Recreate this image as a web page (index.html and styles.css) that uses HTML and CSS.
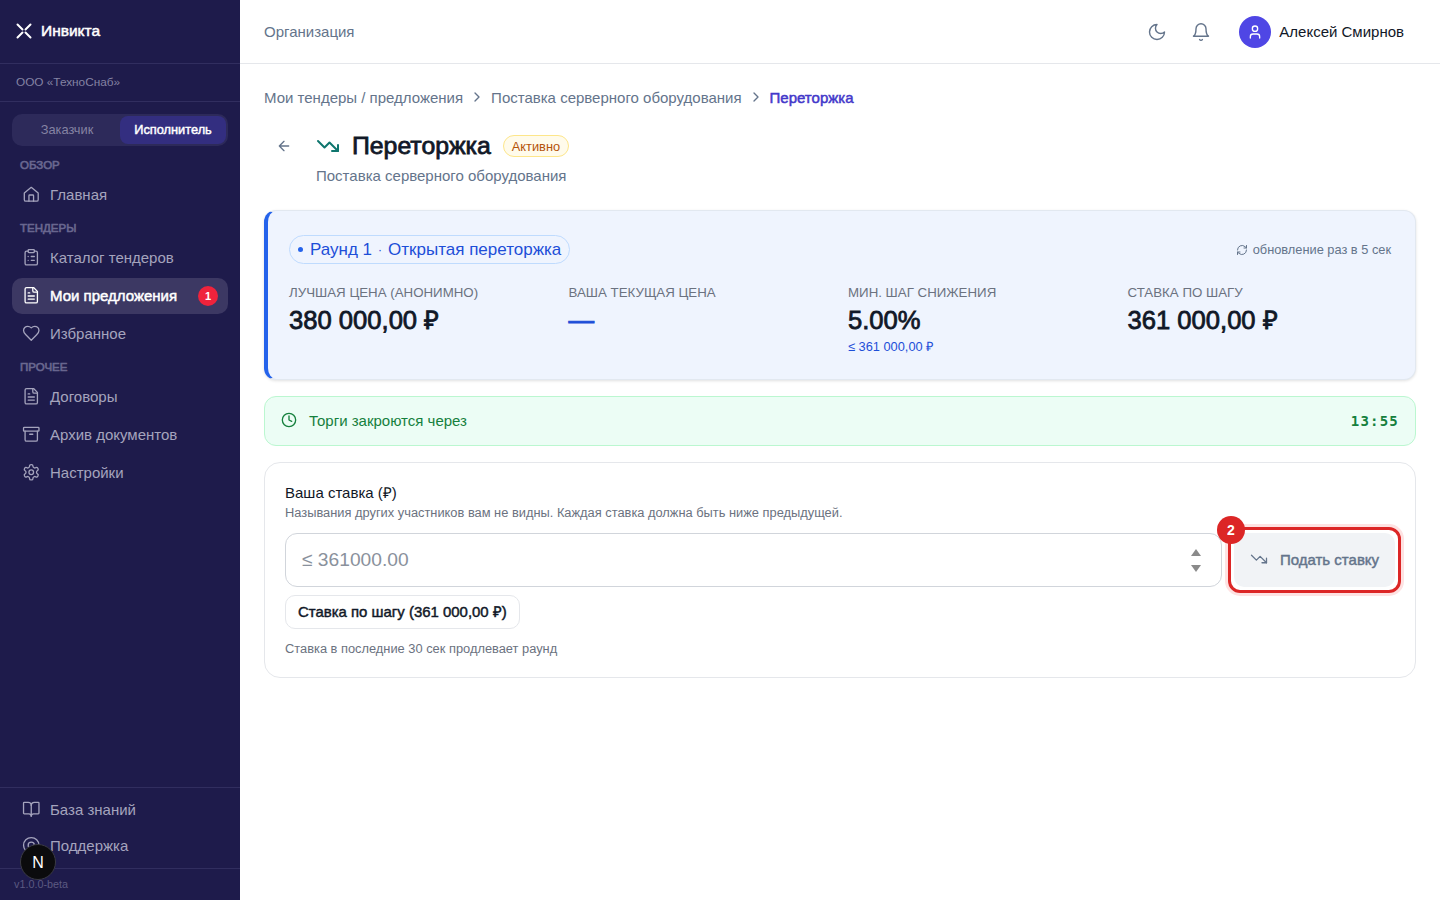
FILE: index.html
```html
<!DOCTYPE html>
<html lang="ru">
<head>
    <meta charset="UTF-8">
    <meta name="viewport" content="width=device-width, initial-scale=1.0">
    <title>Переторжка</title>
    <link rel="stylesheet" href="styles.css">
</head>
<body>
    <aside class="sidebar">
        <div class="logo">
            <svg class="logo-icon" viewBox="0 0 16 16" fill="none" stroke="#fff" stroke-width="2.200" stroke-linecap="butt"><path d="M1.500 1.500l5 5M14.500 1.500l-5 5M1.500 14.500l5-5M14.500 14.500l-5-5"/></svg>
            <span>Инвикта</span>
        </div>
        <div class="org">ООО «ТехноСнаб»</div>
        <div class="roles">
            <span class="role">Заказчик</span>
            <span class="role role-on">Исполнитель</span>
        </div>
        <nav class="nav">
            <div class="nav-label">ОБЗОР</div>
            <a class="nav-item"><svg class="ico" viewBox="0 0 24 24"><path d="M3 10.500 12 3l9 7.500V19a2 2 0 0 1-2 2H5a2 2 0 0 1-2-2z"/><path d="M9 21v-7a1 1 0 0 1 1-1h4a1 1 0 0 1 1 1v7"/></svg>Главная</a>
            <div class="nav-label">ТЕНДЕРЫ</div>
            <a class="nav-item"><svg class="ico" viewBox="0 0 24 24"><rect x="8" y="2" width="8" height="4" rx="1"/><path d="M16 4h2a2 2 0 0 1 2 2v14a2 2 0 0 1-2 2H6a2 2 0 0 1-2-2V6a2 2 0 0 1 2-2h2"/><path d="M12 11h4M12 16h4M8 11h.01M8 16h.01"/></svg>Каталог тендеров</a>
            <a class="nav-item nav-on"><svg class="ico" viewBox="0 0 24 24"><path d="M15 2H6a2 2 0 0 0-2 2v16a2 2 0 0 0 2 2h12a2 2 0 0 0 2-2V7z"/><path d="M14 2v4a2 2 0 0 0 2 2h4M10 9H8M16 13H8M16 17H8"/></svg>Мои предложения<span class="count">1</span></a>
            <a class="nav-item"><svg class="ico" viewBox="0 0 24 24"><path d="M19 14c1.500-1.500 3-3.200 3-5.500A5.500 5.500 0 0 0 16.500 3c-1.800 0-3 .5-4.500 2-1.500-1.500-2.700-2-4.500-2A5.500 5.500 0 0 0 2 8.500c0 2.300 1.500 4 3 5.500l7 7z"/></svg>Избранное</a>
            <div class="nav-label">ПРОЧЕЕ</div>
            <a class="nav-item"><svg class="ico" viewBox="0 0 24 24"><path d="M15 2H6a2 2 0 0 0-2 2v16a2 2 0 0 0 2 2h12a2 2 0 0 0 2-2V7z"/><path d="M14 2v4a2 2 0 0 0 2 2h4M10 9H8M16 13H8M16 17H8"/></svg>Договоры</a>
            <a class="nav-item"><svg class="ico" viewBox="0 0 24 24"><rect x="2" y="3" width="20" height="5" rx="1"/><path d="M4 8v11a2 2 0 0 0 2 2h12a2 2 0 0 0 2-2V8M10 12h4"/></svg>Архив документов</a>
            <a class="nav-item"><svg class="ico" viewBox="0 0 24 24"><path d="M12.220 2h-.440a2 2 0 0 0-2 2v.180a2 2 0 0 1-1 1.730l-.430.250a2 2 0 0 1-2 0l-.150-.080a2 2 0 0 0-2.730.730l-.220.380a2 2 0 0 0 .730 2.730l.150.100a2 2 0 0 1 1 1.720v.510a2 2 0 0 1-1 1.740l-.150.090a2 2 0 0 0-.730 2.730l.220.380a2 2 0 0 0 2.730.730l.150-.080a2 2 0 0 1 2 0l.430.250a2 2 0 0 1 1 1.730V20a2 2 0 0 0 2 2h.440a2 2 0 0 0 2-2v-.180a2 2 0 0 1 1-1.730l.430-.250a2 2 0 0 1 2 0l.150.080a2 2 0 0 0 2.730-.730l.220-.390a2 2 0 0 0-.730-2.730l-.150-.080a2 2 0 0 1-1-1.740v-.500a2 2 0 0 1 1-1.740l.150-.090a2 2 0 0 0 .730-2.730l-.220-.380a2 2 0 0 0-2.730-.730l-.150.080a2 2 0 0 1-2 0l-.430-.250a2 2 0 0 1-1-1.730V4a2 2 0 0 0-2-2z"/><circle cx="12" cy="12" r="3"/></svg>Настройки</a>
        </nav>
        <div class="side-links">
            <a class="nav-item"><svg class="ico" viewBox="0 0 24 24"><path d="M12 7v14"/><path d="M3 18a1 1 0 0 1-1-1V4a1 1 0 0 1 1-1h5a4 4 0 0 1 4 4 4 4 0 0 1 4-4h5a1 1 0 0 1 1 1v13a1 1 0 0 1-1 1h-6a3 3 0 0 0-3 3 3 3 0 0 0-3-3z"/></svg>База знаний</a>
            <a class="nav-item"><svg class="ico" viewBox="0 0 24 24"><circle cx="12" cy="12" r="10"/><circle cx="12" cy="12" r="4"/></svg>Поддержка</a>
        </div>
        <div class="version">v1.0.0-beta</div>
        <div class="next-badge">N</div>
    </aside>

    <div class="main">
        <header class="topbar">
            <span class="top-org">Организация</span>
            <div class="top-right">
                <svg class="top-ico" viewBox="0 0 24 24"><path d="M12 3a6 6 0 0 0 9 9 9 9 0 1 1-9-9z"/></svg>
                <svg class="top-ico" viewBox="0 0 24 24"><path d="M10.300 21a1.940 1.940 0 0 0 3.400 0"/><path d="M6 8a6 6 0 0 1 12 0c0 7 3 9 3 9H3s3-2 3-9"/></svg>
                <div class="user">
                    <span class="avatar"><svg viewBox="0 0 24 24"><path d="M19 21v-2a4 4 0 0 0-4-4H9a4 4 0 0 0-4 4v2"/><circle cx="12" cy="7" r="4"/></svg></span>
                    Алексей Смирнов
                </div>
            </div>
        </header>

        <main class="content">
            <div class="crumbs">
                <span>Мои тендеры / предложения</span>
                <svg class="crumb-sep" viewBox="0 0 24 24"><path d="m9 18 6-6-6-6"/></svg>
                <span>Поставка серверного оборудования</span>
                <svg class="crumb-sep" viewBox="0 0 24 24"><path d="m9 18 6-6-6-6"/></svg>
                <span class="crumb-on">Переторжка</span>
            </div>

            <div class="title-row">
                <svg class="back" viewBox="0 0 24 24"><path d="m12 19-7-7 7-7M19 12H5"/></svg>
                <div>
                    <div class="title-line">
                        <svg class="title-ico" viewBox="0 0 24 24"><path d="M22 17l-8.500-8.500-5 5L2 7"/><path d="M16 17h6v-6"/></svg>
                        <h1>Переторжка</h1>
                        <span class="status">Активно</span>
                    </div>
                    <p class="subtitle">Поставка серверного оборудования</p>
                </div>
            </div>

            <section class="round">
                <div class="round-top">
                    <span class="round-pill"><i class="dot"></i>Раунд 1<span class="pill-sep">·</span>Открытая переторжка</span>
                    <span class="refresh"><svg viewBox="0 0 24 24"><path d="M3 12a9 9 0 0 1 15-6.700L21 8M21 3v5h-5M21 12a9 9 0 0 1-15 6.700L3 16M8 16H3v5"/></svg>обновление раз в 5 сек</span>
                </div>
                <div class="stats">
                    <div class="stat">
                        <div class="stat-label">ЛУЧШАЯ ЦЕНА (АНОНИМНО)</div>
                        <div class="stat-value">380 000,00 ₽</div>
                    </div>
                    <div class="stat">
                        <div class="stat-label">ВАША ТЕКУЩАЯ ЦЕНА</div>
                        <div class="stat-value stat-dash">—</div>
                    </div>
                    <div class="stat">
                        <div class="stat-label">МИН. ШАГ СНИЖЕНИЯ</div>
                        <div class="stat-value">5.00%</div>
                        <div class="stat-note">≤ 361 000,00 ₽</div>
                    </div>
                    <div class="stat">
                        <div class="stat-label">СТАВКА ПО ШАГУ</div>
                        <div class="stat-value">361 000,00 ₽</div>
                    </div>
                </div>
            </section>

            <section class="timer">
                <svg viewBox="0 0 24 24"><circle cx="12" cy="12" r="10"/><path d="M12 6v6l4 2"/></svg>
                <span>Торги закроются через</span>
                <b class="time">13:55</b>
            </section>

            <section class="bid">
                <div class="bid-label">Ваша ставка (₽)</div>
                <div class="bid-hint">Называния других участников вам не видны. Каждая ставка должна быть ниже предыдущей.</div>
                <div class="bid-row">
                    <div class="bid-input">
                        <span>≤ 361000.00</span>
                        <span class="spin"><i class="up"></i><i class="down"></i></span>
                    </div>
                    <div class="submit-wrap">
                        <span class="step-ring"></span>
                        <span class="step-num">2</span>
                        <button class="submit"><svg viewBox="0 0 24 24"><path d="M22 17l-8.500-8.500-5 5L2 7"/><path d="M16 17h6v-6"/></svg>Подать ставку</button>
                    </div>
                </div>
                <button class="step-btn">Ставка по шагу (361 000,00 ₽)</button>
                <div class="bid-foot">Ставка в последние 30 сек продлевает раунд</div>
            </section>
        </main>
    </div>
</body>
</html>
```
FILE: styles.css
```css
:root {
    --side: #1e1b4b;
    --side-line: #312e5f;
    --side-text: #a5a4bd;
    --muted: #6b7280;
    --slate: #64748b;
    --blue: #1d4ed8;
}
* {
    box-sizing: border-box;
}
body {
    margin: 0;
    height: 900px;
    display: flex;
    overflow: hidden;
    font-family: 'Liberation Sans', Arial, sans-serif;
    background: #fff;
    color: #111827;
}
svg {
    fill: none;
    stroke: currentColor;
    stroke-width: 2;
    stroke-linecap: round;
    stroke-linejoin: round;
    flex-shrink: 0;
}
.sidebar {
    position: relative;
    width: 240px;
    flex-shrink: 0;
    display: flex;
    flex-direction: column;
    background: var(--side);
    color: var(--side-text);
}
.logo {
    height: 64px;
    display: flex;
    align-items: center;
    gap: 9px;
    padding: 0 16px 2px;
    border-bottom: 1px solid var(--side-line);
    color: #fff;
    font-size: 15.500px;
    -webkit-text-stroke: 0.5px currentColor;
}
.logo-icon {
    width: 16px;
    height: 16px;
}
.org {
    height: 38px;
    display: flex;
    align-items: center;
    padding: 0 16px 2px;
    border-bottom: 1px solid var(--side-line);
    font-size: 11.800px;
    color: #8583a3;
}
.roles {
    display: flex;
    margin: 12px 12px 0;
    padding: 2px;
    height: 32px;
    border-radius: 10px;
    background: #2d2a5a;
}
.role {
    flex: 1;
    display: flex;
    align-items: center;
    justify-content: center;
    padding-bottom: 2px;
    border-radius: 8px;
    font-size: 12.800px;
    color: #8583a3;
}
.role-on {
    background: #332e80;
    color: #fff;
    -webkit-text-stroke: 0.45px currentColor;
}
.nav {
    flex: 1;
    display: flex;
    flex-direction: column;
    gap: 2px;
    padding: 6px 12px 0;
}
.nav-label {
    height: 23px;
    padding: 7px 8px 0;
    font-size: 11.500px;
    line-height: 13px;
    color: #6a6890;
    -webkit-text-stroke: 0.6px currentColor;
}
.nav-item {
    height: 36px;
    display: flex;
    align-items: center;
    gap: 9.750px;
    padding: 0 10px 2px 9.750px;
    border-radius: 10px;
    font-size: 15px;
    color: var(--side-text);
}
.nav-on {
    background: #3c3863;
    color: #fff;
    -webkit-text-stroke: 0.5px currentColor;
}
.ico {
    width: 18.500px;
    height: 18.500px;
    stroke-width: 1.700;
}
.count {
    margin-left: auto;
    margin-top: 2px;
    width: 20px;
    height: 20px;
    border-radius: 50%;
    display: flex;
    align-items: center;
    justify-content: center;
    background: #ef233c;
    color: #fff;
    font-size: 11px;
    font-weight: 700;
    -webkit-text-stroke: 0;
}
.side-links {
    padding: 4px 12px;
    border-top: 1px solid var(--side-line);
    border-bottom: 1px solid var(--side-line);
}
.version {
    height: 31px;
    padding: 9px 14px 0;
    font-size: 10.800px;
    color: #5c5a82;
}
.next-badge {
    position: absolute;
    left: 20px;
    top: 844px;
    width: 36px;
    height: 36px;
    padding-top: 1px;
    border-radius: 50%;
    display: flex;
    align-items: center;
    justify-content: center;
    background: #0b0b0d;
    border: 1px solid #3a3a44;
    color: #fff;
    font-size: 16px;
}
.main {
    flex: 1;
    min-width: 0;
}
.topbar {
    height: 64px;
    display: flex;
    align-items: center;
    justify-content: space-between;
    padding: 0 36px 0 24px;
    border-bottom: 1px solid #e5e7eb;
}
.top-org {
    font-size: 15px;
    color: var(--slate);
}
.top-right {
    display: flex;
    align-items: center;
    gap: 24px;
}
.top-ico {
    width: 20px;
    height: 20px;
    color: #64748b;
    stroke-width: 1.700;
}
.user {
    display: flex;
    align-items: center;
    gap: 8px;
    margin-left: 4px;
    font-size: 15px;
}
.avatar {
    width: 32px;
    height: 32px;
    border-radius: 50%;
    display: flex;
    align-items: center;
    justify-content: center;
    background: #4f46e5;
    color: #fff;
}
.avatar svg {
    width: 16px;
    height: 16px;
}
.content {
    padding: 23px 24px 0;
}
.crumbs {
    height: 20px;
    display: flex;
    align-items: center;
    gap: 6px;
    font-size: 15px;
    color: var(--slate);
}
.crumb-sep {
    width: 16px;
    height: 16px;
}
.crumb-on {
    color: #4338ca;
    -webkit-text-stroke: 0.5px currentColor;
}
.title-row {
    display: flex;
    gap: 24px;
    margin-top: 19px;
    padding-left: 12px;
}
.back {
    width: 16px;
    height: 16px;
    margin-top: 12px;
    color: var(--slate);
}
.title-line {
    display: flex;
    align-items: center;
    height: 40px;
}
.title-ico {
    width: 24px;
    height: 24px;
    color: #0f766e;
    margin-right: 12px;
}
h1 {
    margin: 0 12px 0 0;
    font-size: 24.800px;
    font-weight: 400;
    -webkit-text-stroke: 0.8px currentColor;
}
.status {
    height: 22px;
    padding: 0 8px;
    display: flex;
    align-items: center;
    border: 1px solid #fde68a;
    border-radius: 11px;
    background: #fffbeb;
    font-size: 12.800px;
    color: #b45309;
}
.subtitle {
    margin: 1px 0 0;
    font-size: 15px;
    line-height: 18px;
    color: var(--slate);
}
.round {
    height: 170px;
    margin-top: 25px;
    padding: 24px 24px 0 21px;
    border: 1px solid #e2e8f0;
    border-left: 4px solid #2563eb;
    border-radius: 12px;
    background: #eff4fe;
    box-shadow: 0 1px 3px rgba(0,0,0,0.12);
}
.round-top {
    display: flex;
    align-items: center;
    justify-content: space-between;
}
.round-pill {
    height: 29px;
    display: flex;
    align-items: center;
    padding: 0 8px;
    border: 1px solid #bfdbfe;
    border-radius: 15px;
    color: var(--blue);
    font-size: 17px;
}
.dot {
    width: 5px;
    height: 5px;
    margin-right: 7px;
    border-radius: 50%;
    background: #2563eb;
}
.pill-sep {
    margin: 0 6px;
    font-size: 12px;
}
.refresh {
    display: flex;
    align-items: center;
    gap: 5px;
    font-size: 12.800px;
    color: var(--slate);
}
.refresh svg {
    width: 12px;
    height: 12px;
}
.stats {
    display: grid;
    grid-template-columns: repeat(4, 1fr);
    gap: 0 16px;
    margin-top: 20px;
}
.stat-label {
    font-size: 13.300px;
    line-height: 17px;
    color: var(--muted);
}
.stat-value {
    margin-top: 2px;
    font-size: 25.600px;
    line-height: 34px;
    -webkit-text-stroke: 0.8px currentColor;
}
.stat-dash {
    color: var(--blue);
}
.stat-note {
    margin-top: 2px;
    font-size: 12.800px;
    line-height: 16px;
    color: var(--blue);
}
.timer {
    height: 50px;
    margin-top: 16px;
    display: flex;
    align-items: center;
    gap: 12px;
    padding: 0 16px 2px;
    border: 1px solid #bbf7d0;
    border-radius: 12px;
    background: #ecfdf5;
    color: #15803d;
    font-size: 15px;
}
.timer svg {
    width: 16px;
    height: 16px;
}
.time {
    margin: 2px 0 0 auto;
    font-family: 'DejaVu Sans Mono', monospace;
    font-size: 14px;
    letter-spacing: 1.200px;
}
.bid {
    height: 216px;
    margin-top: 16px;
    padding: 20px 20px 0;
    border: 1px solid #e5e7eb;
    border-radius: 16px;
}
.bid-label {
    font-size: 15px;
    line-height: 19px;
}
.bid-hint {
    margin-top: 3px;
    font-size: 12.850px;
    line-height: 16px;
    color: var(--muted);
}
.bid-row {
    display: flex;
    gap: 12px;
    margin-top: 12px;
}
.bid-input {
    flex: 1;
    height: 54px;
    display: flex;
    align-items: center;
    justify-content: space-between;
    padding: 0 20px 0 16px;
    border: 1px solid #d1d5db;
    border-radius: 12px;
    font-size: 19.200px;
    color: #8a919c;
}
.spin {
    display: flex;
    flex-direction: column;
    gap: 9px;
}
.spin i {
    width: 0;
    height: 0;
    border-left: 5px solid transparent;
    border-right: 5px solid transparent;
}
.spin .up {
    border-bottom: 7px solid #8a8a8a;
}
.spin .down {
    border-top: 7px solid #8a8a8a;
}
.submit-wrap {
    position: relative;
    width: 161px;
    height: 54px;
}
.step-ring {
    position: absolute;
    inset: -6px;
    border: 3px solid #dc2626;
    border-radius: 12px;
    box-shadow: 0 0 0 3px #fee2e2;
}
.step-num {
    position: absolute;
    left: -17px;
    top: -17px;
    width: 28px;
    height: 28px;
    border-radius: 50%;
    display: flex;
    align-items: center;
    justify-content: center;
    background: #dc2626;
    color: #fff;
    font-size: 14px;
    font-weight: 700;
}
.submit {
    width: 100%;
    height: 100%;
    display: flex;
    align-items: center;
    justify-content: center;
    gap: 12px;
    padding: 0 0 2px;
    border: none;
    border-radius: 10px;
    background: #f1f3f6;
    color: var(--slate);
    font-family: inherit;
    font-size: 15px;
    -webkit-text-stroke: 0.45px currentColor;
}
.submit svg {
    width: 18px;
    height: 18px;
    stroke-width: 1.700;
}
.step-btn {
    display: block;
    height: 34px;
    margin-top: 8px;
    padding: 0 12px 2px;
    border: 1px solid #e5e7eb;
    border-radius: 10px;
    background: #fff;
    color: #111827;
    font-family: inherit;
    font-size: 14.950px;
    -webkit-text-stroke: 0.45px currentColor;
}
.bid-foot {
    margin-top: 12px;
    font-size: 12.850px;
    line-height: 16px;
    color: var(--muted);
}
```
